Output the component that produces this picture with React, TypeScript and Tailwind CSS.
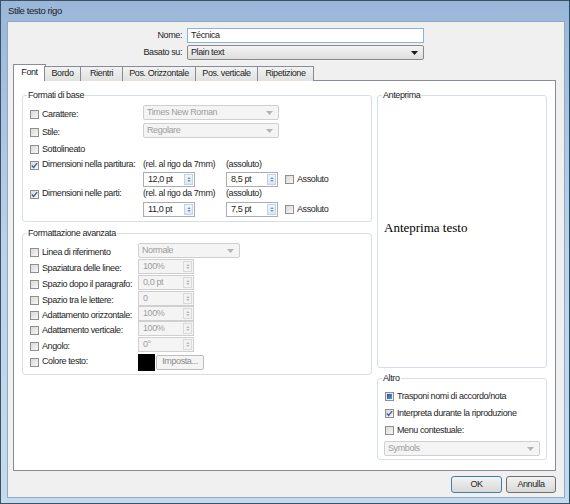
import React from 'react';

type CheckState = 'off' | 'on' | 'mixed';

const Check = ({ state = 'off' }: { state?: CheckState }) => (
  <span className="flex h-[9px] w-[9px] shrink-0 items-center justify-center border border-[#8f8f8f] bg-linear-to-br from-[#d9d9d9] to-[#f7f7f7]">
    {state === 'on' && (
      <svg viewBox="0 0 8 8" className="h-[7px] w-[7px]">
        <path d="M1 4 L3 6.3 L7 1.2" fill="none" stroke="#3d5f97" strokeWidth="1.5" />
      </svg>
    )}
    {state === 'mixed' && <span className="h-[5px] w-[5px] bg-linear-to-br from-[#1f5b96] to-[#5d96cf]" />}
  </span>
);

const Arrow = ({ color }: { color: string }) => (
  <svg viewBox="0 0 7 4" className="h-[4px] w-[7px]">
    <path d="M0 0 H7 L3.5 4 Z" fill={color} />
  </svg>
);

const Combo = ({ text, className, disabled }: { text: string; className: string; disabled?: boolean }) => (
  <div
    className={`flex h-[15px] shrink-0 items-center justify-between rounded-[2px] border pl-[3px] pr-[5px] ${className} ${
      disabled
        ? 'border-[#cfcfcf] bg-[#f4f4f4] text-[#9d9d9d]'
        : 'border-[#8a8a8a] bg-linear-to-b from-[#f4f4f4] to-[#dedede] text-[#1e1e1e]'
    }`}
  >
    <span>{text}</span>
    <Arrow color={disabled ? '#b4b4b4' : '#1a1a1a'} />
  </div>
);

const Spin = ({ value, disabled, className = 'w-[51px]' }: { value: string; disabled?: boolean; className?: string }) => (
  <div
    className={`flex h-[15px] shrink-0 items-center border ${className} ${
      disabled ? 'border-[#cfcfcf] bg-[#f4f4f4] text-[#9d9d9d]' : 'border-[#abadb3] bg-white text-[#1e1e1e]'
    }`}
  >
    <span className="flex-1 pl-[4px]">{value}</span>
    <span
      className={`mr-[1px] flex h-[11px] w-[9px] flex-col items-center justify-center gap-[1px] border ${
        disabled ? 'border-[#dadada] bg-[#f2f2f2]' : 'border-[#c3d3e4] bg-linear-to-b from-[#f1f6fc] to-[#dae7f5]'
      }`}
    >
      <svg viewBox="0 0 5 3" className="h-[2px] w-[4px]">
        <path d="M0 3 H5 L2.5 0 Z" fill={disabled ? '#b8b8b8' : '#6f94bd'} />
      </svg>
      <svg viewBox="0 0 5 3" className="h-[2px] w-[4px]">
        <path d="M0 0 H5 L2.5 3 Z" fill={disabled ? '#b8b8b8' : '#6f94bd'} />
      </svg>
    </span>
  </div>
);

const CheckLabel = ({ label, state, className = '' }: { label: string; state?: CheckState; className?: string }) => (
  <div className={`flex shrink-0 items-center gap-[3px] ${className}`}>
    <Check state={state} />
    <span>{label}</span>
  </div>
);

const advanced: { label: string; value: string; h: string }[] = [
  { label: 'Spaziatura delle linee:', value: '100%', h: 'h-[16px]' },
  { label: 'Spazio dopo il paragrafo:', value: '0,0 pt', h: 'h-[16px]' },
  { label: 'Spazio tra le lettere:', value: '0', h: 'h-[15px]' },
  { label: 'Adattamento orizzontale:', value: '100%', h: 'h-[15px]' },
  { label: 'Adattamento verticale:', value: '100%', h: 'h-[16px]' },
  { label: 'Angolo:', value: '0°', h: 'h-[16px]' },
];

const tabs = ['Bordo', 'Rientri', 'Pos. Orizzontale', 'Pos. verticale', 'Ripetizione'];
const tabW = ['w-[37px]', 'w-[42px]', 'w-[73px]', 'w-[62px]', 'w-[56px]'];

export default function App() {
  return (
    <div className="flex h-[504px] w-[570px] flex-col border border-[#3b5166] border-r-[#1d4f63] bg-linear-to-b from-[#9ab7d9] via-[#bcd2ea] to-[#c6daee] font-['Liberation_Sans',Arial,sans-serif] text-[9px] tracking-[-0.4px] text-[#1e1e1e]">
      <div className="flex h-[20px] shrink-0 items-center pl-[7px] text-[9.5px]">Stile testo rigo</div>

      <div className="mb-[5px] ml-[6px] mr-[4px] flex flex-1 flex-col border border-[#8fa9c4] bg-[#f0f0f0]">
        {/* Nome / Basato su */}
        <div className="mt-[6px] flex items-center">
          <span className="w-[174px] text-right">Nome:</span>
          <div className="ml-[5px] flex h-[15px] w-[237px] items-center border border-[#8db2d8] bg-white pl-[3px]">Técnica</div>
        </div>
        <div className="mt-[2px] flex items-center">
          <span className="w-[174px] text-right">Basato su:</span>
          <Combo text="Plain text" className="ml-[5px] w-[237px]" />
        </div>

        {/* Tabs */}
        <div className="relative z-10 mt-[4px] ml-[5px] flex h-[17px] items-end">
          <div className="flex h-[17px] w-[33px] items-center justify-center border border-b-0 border-[#898c95] bg-white pb-[1px]">
            Font
          </div>
          {tabs.map((t, i) => (
            <div
              key={t}
              className={`flex h-[15px] items-center justify-center border-t border-r border-[#898c95] bg-linear-to-b from-[#f2f2f2] to-[#e1e1e1] ${tabW[i]} ${
                i === 0 ? '-ml-[2px] border-l' : ''
              }`}
            >
              {t}
            </div>
          ))}
        </div>

        {/* Panel */}
        <div className="-mt-px ml-[5px] flex h-[391px] w-[543px] gap-[5px] border border-[#898c95] bg-white pl-[8px] pt-[8px]">
          <div className="flex w-[350px] flex-col gap-[5px]">
            <fieldset className="h-[133px] rounded-[3px] border border-[#d5dfe5] pl-[4px]">
              <legend className="px-[1px] leading-[12px]">Formati di base</legend>
              <div className="flex flex-col pl-[3px] pt-[4px]">
                <div className="flex h-[18px] items-start">
                  <CheckLabel label="Carattere:" className="mt-[3px] w-[113px]" />
                  <Combo text="Times New Roman" className="w-[136px]" disabled />
                </div>
                <div className="flex h-[18px] items-start">
                  <CheckLabel label="Stile:" className="mt-[3px] w-[113px]" />
                  <Combo text="Regolare" className="w-[136px]" disabled />
                </div>
                <div className="flex h-[17px] items-center">
                  <CheckLabel label="Sottolineato" />
                </div>
                <div className="flex h-[14px] items-center">
                  <CheckLabel label="Dimensioni nella partitura:" state="on" className="w-[113px]" />
                  <span className="w-[83px]">(rel. al rigo da 7mm)</span>
                  <span>(assoluto)</span>
                </div>
                <div className="flex h-[15px] items-center">
                  <Spin value="12,0 pt" className="ml-[113px] w-[52px]" />
                  <Spin value="8,5 pt" className="ml-[31px] w-[52px]" />
                  <CheckLabel label="Assoluto" className="ml-[7px]" />
                </div>
                <div className="flex h-[14px] items-center">
                  <CheckLabel label="Dimensioni nelle parti:" state="on" className="w-[113px]" />
                  <span className="w-[83px]">(rel. al rigo da 7mm)</span>
                  <span>(assoluto)</span>
                </div>
                <div className="mt-[1px] flex h-[15px] items-center">
                  <Spin value="11,0 pt" className="ml-[113px] w-[52px]" />
                  <Spin value="7,5 pt" className="ml-[31px] w-[52px]" />
                  <CheckLabel label="Assoluto" className="ml-[7px]" />
                </div>
              </div>
            </fieldset>

            <fieldset className="h-[148px] rounded-[3px] border border-[#d5dfe5] pl-[4px]">
              <legend className="px-[1px] leading-[12px]">Formattazione avanzata</legend>
              <div className="flex flex-col pl-[3px] pt-[4px]">
                <div className="flex h-[16px] items-start">
                  <CheckLabel label="Linea di riferimento" className="mt-[3px] w-[108px]" />
                  <Combo text="Normale" className="w-[102px]" disabled />
                </div>
                {advanced.map((r) => (
                  <div key={r.label} className={`flex items-start ${r.h}`}>
                    <CheckLabel label={r.label} className="mt-[3px] w-[108px]" />
                    <Spin value={r.value} disabled className="w-[56px]" />
                  </div>
                ))}
                <div className="flex h-[18px] items-center">
                  <CheckLabel label="Colore testo:" className="w-[108px]" />
                  <div className="h-[17px] w-[17px] bg-black" />
                  <div className="ml-[1px] flex h-[15px] w-[48px] items-center justify-center rounded-[2px] border border-[#bdbdbd] bg-[#f4f4f4] text-[#8a8a8a]">
                    Imposta...
                  </div>
                </div>
              </div>
            </fieldset>
          </div>

          <div className="flex w-[170px] flex-col gap-[4px]">
            <fieldset className="h-[279px] rounded-[3px] border border-[#d5dfe5] pl-[4px]">
              <legend className="px-[1px] leading-[12px]">Anteprima</legend>
              <div className="flex h-[258px] items-center pb-[5px] pl-[2px] font-['Liberation_Serif','Times_New_Roman',serif] text-[13px] tracking-normal text-black">
                Anteprima testo
              </div>
            </fieldset>
            <fieldset className="h-[88px] rounded-[3px] border border-[#d5dfe5] pl-[4px]">
              <legend className="px-[1px] leading-[12px]">Altro</legend>
              <div className="flex flex-col pl-[2px] pt-[4px]">
                <div className="flex h-[17px] items-center">
                  <CheckLabel label="Trasponi nomi di accordo/nota" state="mixed" className="ml-[1px]" />
                </div>
                <div className="flex h-[17px] items-center">
                  <CheckLabel label="Interpreta durante la riproduzione" state="on" className="ml-[1px]" />
                </div>
                <div className="flex h-[17px] items-center">
                  <CheckLabel label="Menu contestuale:" className="ml-[1px]" />
                </div>
                <Combo text="Symbols" className="mt-[2px] w-[156px]" disabled />
              </div>
            </fieldset>
          </div>
        </div>

        {/* Buttons */}
        <div className="mt-[5px] flex justify-end gap-[4px] pr-[8px]">
          <div className="flex h-[17px] w-[51px] items-center justify-center rounded-[3px] border border-[#3c7fb1] bg-linear-to-b from-[#f2f2f2] to-[#d9d9d9]">
            OK
          </div>
          <div className="flex h-[17px] w-[50px] items-center justify-center rounded-[3px] border border-[#707070] bg-linear-to-b from-[#f2f2f2] to-[#d9d9d9]">
            Annulla
          </div>
        </div>
      </div>
    </div>
  );
}
